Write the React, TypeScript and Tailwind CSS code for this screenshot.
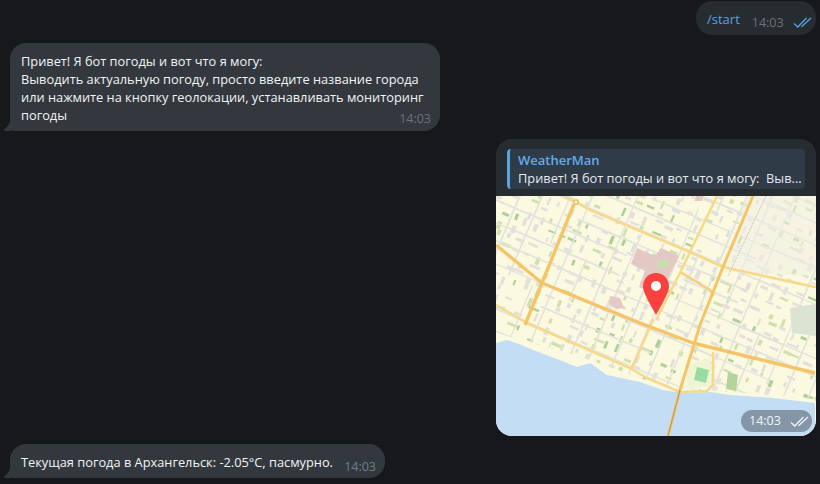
import React from "react";

const seeded = (seed: number) => {
  let s = seed;
  return () => {
    s = (s * 16807) % 2147483647;
    return (s - 1) / 2147483646;
  };
};

type Block = { x: number; y: number; w: number; h: number; fill: string };
type Street = { x1: number; y1: number; x2: number; y2: number; w: number };

const makeBlocks = () => {
  const rnd = seeded(4711);
  const blocks: Block[] = [];
  for (let gx = -120; gx < 440; gx += 12) {
    for (let gy = -120; gy < 360; gy += 10) {
      if (rnd() < 0.2) continue;
      const long = rnd() > 0.5;
      const w = long ? 5 + rnd() * 6 : 2 + rnd() * 2.5;
      const h = long ? 2 + rnd() * 1.500 : 4 + rnd() * 5;
      const pick = rnd();
      const fill = pick < 0.62 ? "#e2e0da" : pick < 0.88 ? "#cfe0ad" : "#aed096";
      blocks.push({ x: gx + rnd() * 5, y: gy + rnd() * 4, w, h, fill });
    }
  }
  return blocks;
};

const makeStreets = () => {
  const rnd = seeded(907);
  const streets: Street[] = [];
  for (let x = -130; x < 450; x += 18 + rnd() * 10) {
    for (let y = -130; y < 370; y += 45) {
      if (rnd() < 0.2) continue;
      streets.push({ x1: x, y1: y, x2: x, y2: y + 45, w: 1.2 + rnd() * 0.8 });
    }
  }
  for (let y = -130; y < 370; y += 14 + rnd() * 8) {
    for (let x = -130; x < 450; x += 60) {
      if (rnd() < 0.2) continue;
      streets.push({ x1: x, y1: y, x2: x + 60, y2: y, w: 1.2 + rnd() * 0.8 });
    }
  }
  return streets;
};

const blocks = makeBlocks();
const streets = makeStreets();

const MapPicture = () => (
  <svg viewBox="0 0 320 240" width="320" height="240" className="block">
    <defs>
      <filter id="soft">
        <feGaussianBlur stdDeviation="0.4" />
      </filter>
    </defs>
    <rect width="320" height="240" fill="#fbf9e0" />
    <g filter="url(#soft)">
      <g transform="rotate(23 160 120)">
        {blocks.map((b, i) => (
          <rect key={i} x={b.x} y={b.y} width={b.w} height={b.h} fill={b.fill} />
        ))}
        {streets.map((s, i) => (
          <line key={i} x1={s.x1} y1={s.y1} x2={s.x2} y2={s.y2} stroke="#e3e3de" strokeWidth={s.w} />
        ))}
      </g>
      {/* central pink quarter */}
      <path d="M141 52l18 8 6-8 18 8-8 16-6 14-8-3-6 9-12-5 6-16-14-7z" fill="#e3c8c4" />
      <path d="M114 100l10 2 4 10-8 1-7-5z" fill="#e3c8c4" />
      <path d="M200 0h8l-2 5h-8z" fill="#e3c8c4" />
      <path d="M160 66l12-3 2 6-12 4z" fill="#c7dfae" />
      <path d="M294 112l26-4v32l-24-3z" fill="#dbe4d3" />
      <path d="M250 0l70 0v80l-90-4z" fill="#f0efe3" opacity="0.55" />
      <path d="M270 0l-38 80" stroke="#b9b9b3" strokeWidth="0.9" fill="none" strokeDasharray="1.5 1" />
      {/* stadium and park by the river */}
      <path d="M190 170l24-8 3 28-26 3z" fill="#eef4d4" />
      <path d="M201 171l12 3-3 13-12-3z" fill="#98dca4" />
      <path d="M232 176l10 3-2 16-10-2z" fill="#b5d49c" />
      {/* sand along the bank */}
      <path d="M0 137l37 10 60 18 50 18 30 9 60 4 82 7v12H0z" fill="#fbf9df" />
      {/* river */}
      <path
        d="M0 147l11-3 12 4 14 6 24 9 20 8 13-4 17 12 33 7 23 8 20 3 27-1 20 3 43 3 42 5v33H0z"
        fill="#c3ddf4"
      />
      {/* side streets */}
      <g fill="none" stroke="#f7d98c" strokeLinecap="round" strokeLinejoin="round" strokeWidth="2.6">
        <path d="M186 77l28 17 3 5" stroke="#f6cf7c" />
        <path d="M157 124l-21 48" />
        <path d="M0 109l31 18 103 45 17 10 33 14 27-1 6-6 0-32" />
        <path d="M69 1l11 5 14 8 100 42 33 15 27 6 65 14" />
        <path d="M221 0l-27 56-10 21-23 45" />
      </g>
      {/* main roads */}
      <g fill="none" stroke="#f6c467" strokeWidth="3.4" strokeLinejoin="round">
        <path d="M0 49l46 38 98 40 53 20 122 30" />
        <path d="M78 8l-49 121" />
        <path d="M257 0l-30 71-23 58-20 65-12 46" strokeWidth="3" />
      </g>
      <path d="M184 194l-12 46" fill="none" stroke="#8b8a78" strokeWidth="0.7" />
      <circle cx="80" cy="6" r="3" fill="#e9c66b" />
      <circle cx="80" cy="6" r="1.3" fill="#fbf9df" />
    </g>
    {/* location pin */}
    <path
      d="M160 77c-7.300 0-13 5.700-13 13 0 5.200 3.100 11.200 13 29 9.900-17.800 13-23.800 13-29 0-7.300-5.700-13-13-13z"
      fill="#fb4040"
    />
    <circle cx="160" cy="90" r="5" fill="#fff" />
  </svg>
);

const Ticks = ({ color }: { color: string }) => (
  <svg width="19" height="11" viewBox="0 0 19 11" fill="none" stroke={color} strokeWidth="1.3">
    <path d="M1 6.500 4.800 10 13.500 1" />
    <path d="M8.500 9.800 18 1" />
  </svg>
);

const Tail = () => (
  <svg
    width="8"
    height="12"
    viewBox="0 0 8 12"
    className="absolute bottom-0 left-[-6px]"
    fill="#33383e"
  >
    <path d="M7 0v12H1.500C.3 12-.3 11 .5 10.200 3 8 5.500 5 7 0z" />
  </svg>
);

const App = () => {
  return (
    <div className="flex h-[484px] w-[820px] flex-col gap-2 overflow-hidden bg-[#17181c] pt-px pr-1 pl-[10px] font-['Open_Sans',sans-serif] text-[12.8px] leading-[18px] text-[#f2f4f6]">
      <div className="flex h-[34px] w-[120px] self-end rounded-[16px] bg-[#272c31] pt-[9px] pl-[11px]">
        <span className="text-[13px] text-[#5aa2e6]">/start</span>
        <span className="mt-1 ml-3 text-[12.5px] text-[#6c7177]">14:03</span>
        <span className="mt-[7px] ml-[9px]">
          <Ticks color="#5aa2e6" />
        </span>
      </div>

      <div className="relative h-[88px] w-[430px] rounded-[16px] rounded-bl-[4px] bg-[#33383e] px-[11px] pt-[9px]">
        <Tail />
        <p className="whitespace-nowrap">
          Привет! Я бот погоды и вот что я могу:
          <br />
          Выводить актуальную погоду, просто введите название города
          <br />
          или нажмите на кнопку геолокации, устанавливать мониторинг
          <br />
          погоды
        </p>
        <span className="absolute right-[9px] bottom-[3px] text-[12.5px] text-[#6c7177]">14:03</span>
      </div>

      <div className="flex h-[297px] w-[320px] flex-col self-end overflow-hidden rounded-[16px] bg-[#272c31]">
        <div className="mx-[11px] mt-[10px] mb-[7px] flex h-10 w-[298px] flex-col rounded-[4px] border-l-[3px] border-[#5aa2e6] bg-[#2f3b47] pt-[2px] pl-2">
          <span className="text-[13px] font-semibold text-[#63abeb]">WeatherMan</span>
          <span className="whitespace-nowrap text-[#e6e9ec]">Привет! Я бот погоды и вот что я могу:&nbsp; Выв...</span>
        </div>
        <div className="relative">
          <MapPicture />
          <div className="absolute right-1 bottom-1 flex h-[22px] w-[71px] items-center rounded-[11px] bg-[#8496a8] pl-2 text-[12.5px] text-[#f3f5f7]">
            14:03
            <span className="ml-[9px]">
              <Ticks color="#f3f5f7" />
            </span>
          </div>
        </div>
      </div>

      <div className="relative flex h-[34px] w-[375px] rounded-[16px] rounded-bl-[4px] bg-[#33383e] pt-[9px] pl-[11px]">
        <Tail />
        <span>Текущая погода в Архангельск: -2.05°C, пасмурно.</span>
        <span className="absolute right-[9px] bottom-[2px] text-[12.5px] text-[#6d7d8d]">14:03</span>
      </div>
    </div>
  );
};

export default App;
